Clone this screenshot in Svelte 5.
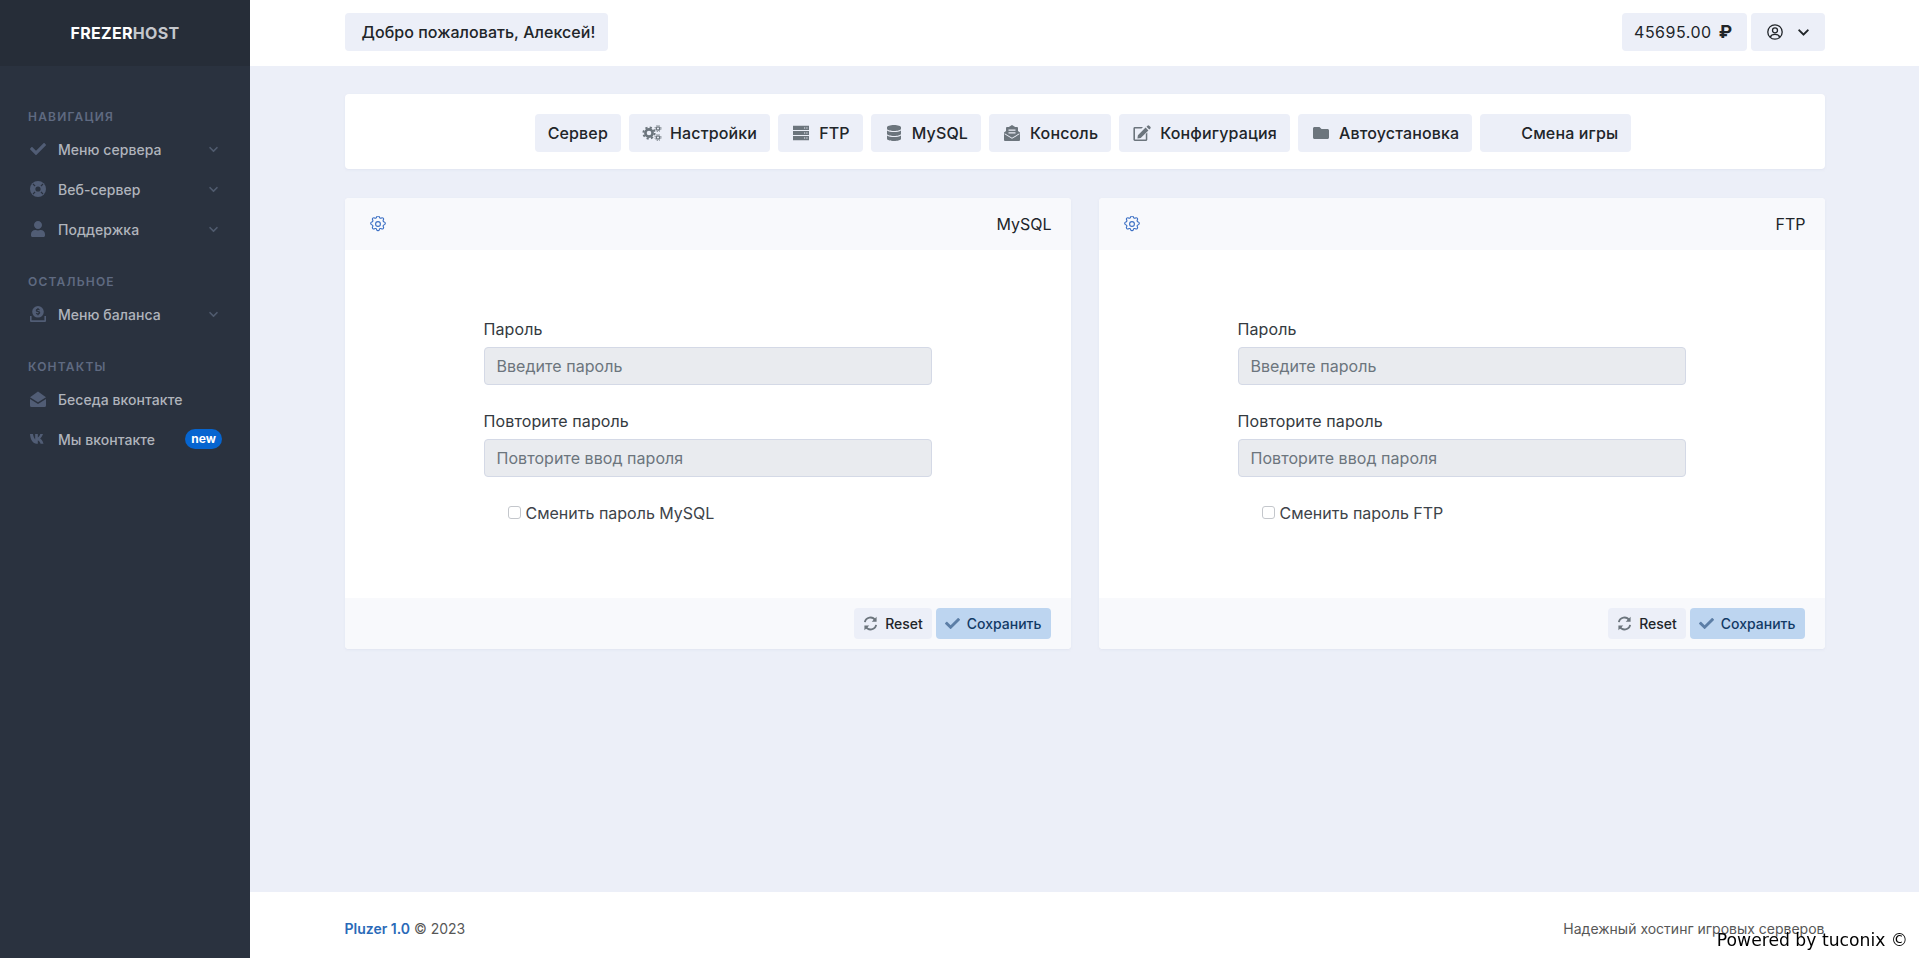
<script>
  const tabs = [
    { label: 'Сервер', icon: null },
    { label: 'Настройки', icon: 'gears' },
    { label: 'FTP', icon: 'server' },
    { label: 'MySQL', icon: 'database' },
    { label: 'Консоль', icon: 'inbox' },
    { label: 'Конфигурация', icon: 'edit' },
    { label: 'Автоустановка', icon: 'folder' },
    { label: 'Смена игры', icon: 'blank' }
  ];
  const cards = [
    { title: 'MySQL', check: 'Сменить пароль MySQL' },
    { title: 'FTP', check: 'Сменить пароль FTP' }
  ];
</script>

{#snippet check(cls)}
  <svg class={cls} viewBox="0 0 512 512"><path fill="currentColor" d="M173.898 439.404l-166.4-166.4c-9.997-9.997-9.997-26.206 0-36.204l36.203-36.204c9.997-9.998 26.207-9.998 36.204 0L192 312.69 432.095 72.596c9.997-9.997 26.207-9.997 36.204 0l36.203 36.204c9.997 9.997 9.997 26.206 0 36.204l-294.4 294.401c-9.998 9.997-26.207 9.997-36.204-.001z"/></svg>
{/snippet}
{#snippet chevron(cls)}
  <svg class={cls} viewBox="0 0 448 512"><path fill="currentColor" d="M207.029 381.476L12.686 187.132c-9.373-9.373-9.373-24.569 0-33.941l22.667-22.667c9.357-9.357 24.522-9.375 33.901-.04L224 284.505l154.745-154.021c9.379-9.335 24.544-9.317 33.901.04l22.667 22.667c9.373 9.373 9.373 24.569 0 33.941L240.971 381.476c-9.373 9.372-24.569 9.372-33.942 0z"/></svg>
{/snippet}
{#snippet gearOutline()}
  <svg class="gear" viewBox="2 2 20 20" fill="none" stroke="currentColor" stroke-width="1.4" stroke-linejoin="round"><path d="M10.3 3.4c.4-1.8 3-1.8 3.4 0a1.7 1.7 0 0 0 2.6 1.1c1.6-1 3.4.8 2.4 2.4a1.7 1.7 0 0 0 1.1 2.6c1.800.4 1.800 3 0 3.4a1.7 1.7 0 0 0-1.1 2.6c1 1.6-.8 3.4-2.4 2.4a1.7 1.7 0 0 0-2.6 1.1c-.4 1.800-3 1.800-3.4 0a1.7 1.7 0 0 0-2.6-1.1c-1.6 1-3.4-.8-2.4-2.4a1.7 1.7 0 0 0-1.1-2.6c-1.800-.4-1.800-3 0-3.4a1.7 1.7 0 0 0 1.1-2.6c-1-1.6.8-3.4 2.4-2.4a1.7 1.7 0 0 0 2.6-1.1z"/><circle cx="12" cy="12" r="3"/></svg>
{/snippet}
{#snippet tabIcon(name)}
  {#if name === 'gears'}
    <svg class="ti" viewBox="0 0 20 16" fill="none" stroke="currentColor"><circle cx="7" cy="8" r="3.6" stroke-width="2.6"/><circle cx="7" cy="8" r="5.6" stroke-width="2" stroke-dasharray="2.2 2.2"/><circle cx="16" cy="3.5" r="1.7" stroke-width="1.3"/><circle cx="16" cy="3.5" r="3" stroke-width="1" stroke-dasharray="1.2 1.2"/><circle cx="16" cy="12.5" r="1.7" stroke-width="1.3"/><circle cx="16" cy="12.5" r="3" stroke-width="1" stroke-dasharray="1.2 1.2"/></svg>
  {:else if name === 'server'}
    <svg class="ti" viewBox="0 0 20 16"><path fill="currentColor" fill-rule="evenodd" d="M2 .8h16v4.300H2zM13 2.400h1.200v1.200H13zM15.300 2.400h1.200v1.200h-1.200zM2 5.900h16v4.200H2zM13 7.400h1.200v1.200H13zM15.300 7.400h1.200v1.200h-1.200zM2 10.900h16v4.300H2zM13 12.400h1.200v1.200H13zM15.300 12.400h1.200v1.200h-1.200z"/></svg>
  {:else if name === 'database'}
    <svg class="ti" viewBox="0 0 448 512"><path fill="currentColor" d="M448 73.143v45.714C448 159.143 347.667 192 224 192S0 159.143 0 118.857V73.143C0 32.857 100.333 0 224 0s224 32.857 224 73.143zM448 176v102.857C448 319.143 347.667 352 224 352S0 319.143 0 278.857V176c48.125 33.143 136.208 48.572 224 48.572S399.874 209.143 448 176zm0 160v102.857C448 479.143 347.667 512 224 512S0 479.143 0 438.857V336c48.125 33.143 136.208 48.572 224 48.572S399.874 369.143 448 336z"/></svg>
  {:else if name === 'inbox'}
    <svg class="ti" viewBox="-2 0 20 16"><path fill="currentColor" fill-rule="evenodd" d="M8 0l3.200 2H13a1 1 0 0 1 1 1v3l2 1.500V15a1 1 0 0 1-1 1H1a1 1 0 0 1-1-1V7.500L2 6V3a1 1 0 0 1 1-1h1.800zM4.500 4.500v1.200h7V4.500zM4.500 7.300v1.200h7V7.300zM.6 8.300L8 12.700l7.400-4.400v1L8 13.700.6 9.300z"/></svg>
  {:else if name === 'edit'}
    <svg class="ti" viewBox="-1 0 20 16"><path fill="currentColor" d="M12.600 2.600l2.800 2.800-7.700 7.700-3.300.5.500-3.300zM13.500 1.700l1-1a1.200 1.200 0 0 1 1.700 0l1.100 1.100a1.200 1.200 0 0 1 0 1.700l-1 1zM1.700 2H10L8.500 3.600H2v10.800h10.800V9l1.500-1.500v7.300a1.500 1.500 0 0 1-1.500 1.200H1.700A1.500 1.500 0 0 1 .4 14.800V3.200A1.500 1.500 0 0 1 1.700 2z"/></svg>
  {:else if name === 'folder'}
    <svg class="ti" viewBox="0 0 512 512"><path fill="currentColor" d="M464 128H272l-64-64H48C21.490 64 0 85.490 0 112v288c0 26.510 21.490 48 48 48h416c26.510 0 48-21.490 48-48V176c0-26.510-21.490-48-48-48z"/></svg>
  {:else}
    <span class="ti"></span>
  {/if}
{/snippet}

<div class="app">
  <aside class="sidebar">
    <div class="brand"><span class="b1">FREZER</span><span class="b2">HOST</span></div>
    <nav class="nav">
      <div class="heading">Навигация</div>
      <a class="item">
        <span class="ni">{@render check('si')}</span><span class="nl">Меню сервера</span>{@render chevron('chev')}
      </a>
      <a class="item">
        <span class="ni"><svg class="si" viewBox="0 0 16 16"><circle cx="8" cy="8" r="8" fill="currentColor"/><path d="M3 3l10 10M13 3L3 13" stroke="#2a323f" stroke-width="1.100"/><circle cx="8" cy="8" r="4.200" fill="currentColor"/><circle cx="8" cy="8" r="2.600" fill="#2a323f"/></svg></span><span class="nl">Веб-сервер</span>{@render chevron('chev')}
      </a>
      <a class="item">
        <span class="ni"><svg class="si" viewBox="0 0 448 512"><path fill="currentColor" d="M224 256c70.700 0 128-57.300 128-128S294.700 0 224 0 96 57.300 96 128s57.300 128 128 128zm89.600 32h-16.700c-22.200 10.200-46.900 16-72.900 16s-50.600-5.800-72.900-16h-16.700C60.200 288 0 348.200 0 422.400V464c0 26.500 21.500 48 48 48h352c26.500 0 48-21.500 48-48v-41.600c0-74.200-60.200-134.400-134.400-134.400z"/></svg></span><span class="nl">Поддержка</span>{@render chevron('chev')}
      </a>
      <div class="heading">Остальное</div>
      <a class="item">
        <span class="ni"><svg class="si" viewBox="0 0 16 16"><path fill="currentColor" fill-rule="evenodd" d="M8 0a5.800 5.800 0 1 1 0 11.600A5.800 5.800 0 0 1 8 0zM7.400 2v.8c-1 .2-1.600.8-1.600 1.600 0 1 .8 1.400 1.800 1.700.8.200 1.100.4 1.100.7s-.4.500-.9.500a2 2 0 0 1-1.400-.5l-.6.900c.4.300 1 .6 1.600.7v.8h1.200v-.8c1-.2 1.600-.8 1.600-1.700 0-1-.7-1.400-1.800-1.700-.8-.2-1.100-.4-1.100-.6s.3-.4.800-.4c.4 0 .9.100 1.300.4l.5-.9a3 3 0 0 0-1.300-.5V2zM0 10h1.600v4.300h12.800V10H16v5a1 1 0 0 1-1 1H1a1 1 0 0 1-1-1z"/></svg></span><span class="nl">Меню баланса</span>{@render chevron('chev')}
      </a>
      <div class="heading">Контакты</div>
      <a class="item">
        <span class="ni"><svg class="si" viewBox="0 0 16 16"><path fill="currentColor" d="M0 6.300L8 .5l8 5.800-8 5-8-5zM0 8v6.500A1.500 1.500 0 0 0 1.500 16h13a1.500 1.500 0 0 0 1.500-1.500V8l-8 5z"/></svg></span><span class="nl">Беседа вконтакте</span>
      </a>
      <a class="item">
        <span class="ni"><svg class="si" viewBox="0 0 18 12"><path fill="currentColor" d="M0 .5h3.300c.5 3 1.700 5.300 2.500 6V.5h3v3.800c.9-.3 2.200-2 2.800-3.800h3c-.5 2.100-2 4-3.200 5 1.200.7 3 2.400 3.800 5.800h-3.300c-.6-2-2-3.300-3.100-3.500v3.500h-.7C4 11.800.3 7.500 0 .5z"/></svg></span><span class="nl">Мы вконтакте</span><span class="new">new</span>
      </a>
    </nav>
  </aside>

  <div class="main">
    <header class="topbar">
      <div class="wrap topin">
        <button class="btn hello">Добро пожаловать, Алексей!</button>
        <div class="topright">
          <button class="btn bal">45695.00 <b class="rub">₽</b></button>
          <button class="btn usr">
            <svg class="uc" viewBox="0 0 16 16" fill="none" stroke="currentColor" stroke-width="1.300"><circle cx="8" cy="8" r="7.200"/><circle cx="8" cy="6.300" r="2.500"/><path d="M3.300 13.200c.6-1.800 2-2.800 4.700-2.800s4.100 1 4.700 2.800"/></svg>
            {@render chevron('uchev')}
          </button>
        </div>
      </div>
    </header>

    <main class="content">
      <div class="wrap">
        <div class="tabs">
          {#each tabs as t}
            <button class="btn tab">{#if t.icon}{@render tabIcon(t.icon)}{/if}{t.label}</button>
          {/each}
        </div>
        <div class="grid">
          {#each cards as c}
            <section class="card">
              <div class="chead">{@render gearOutline()}<span class="ctitle">{c.title}</span></div>
              <div class="cbody">
                <div class="form">
                  <label class="lab" for="">Пароль</label>
                  <input class="inp" placeholder="Введите пароль" disabled />
                  <label class="lab" for="">Повторите пароль</label>
                  <input class="inp" placeholder="Повторите ввод пароля" disabled />
                  <label class="chk"><input type="checkbox" />{c.check}</label>
                </div>
              </div>
              <div class="cfoot">
                <button class="sm reset">
                  <svg class="smi" viewBox="0 0 16 16" fill="none" stroke="currentColor" stroke-width="2"><path d="M2 6.500A6 6 0 0 1 13 4.500"/><path d="M14 9.500A6 6 0 0 1 3 11.500"/><path fill="currentColor" stroke="none" d="M14.500 .8v5.200H9.300zM1.500 15.200V10h5.200z"/></svg>
                  Reset
                </button>
                <button class="sm save">{@render check('smi savei')}Сохранить</button>
              </div>
            </section>
          {/each}
        </div>
      </div>
    </main>

    <footer class="foot">
      <div class="wrap footin">
        <div><a class="pl">Pluzer 1.0</a> © 2023</div>
        <div>Надежный хостинг игровых серверов</div>
      </div>
    </footer>
  </div>
  <div class="powered">Powered by tuconix ©</div>
</div>

<style>
  :global(body) { margin: 0; background: #eceff8; font-family: Inter, "Liberation Sans", sans-serif; color: #212529; font-size: 16px; }
  .app { display: flex; min-height: 958px; }
  .sidebar { width: 250px; flex: none; background: #2a323f; }
  .brand { height: 66px; display: flex; align-items: center; justify-content: center; background: #262d38; font-weight: 700; font-size: 16px; letter-spacing: .3px; }
  .b1 { color: #fff; }
  .b2 { color: #c4c7cc; }
  .nav { padding-top: 18px; }
  .heading { padding: 24px 28px 3px; font-size: 12px; line-height: 18px; font-weight: 600; letter-spacing: .1em; text-transform: uppercase; color: #5f6a81; }
  .item { height: 40px; display: flex; align-items: center; padding: 0 28px; font-size: 14px; font-weight: 500; letter-spacing: .05px; color: #b0b4bc; }
  .ni { width: 20px; display: flex; justify-content: center; margin-right: 10px; color: #515d75; }
  .si { width: 16px; height: 16px; display: block; }
  .nl { flex: 1; }
  .chev { width: 9px; height: 11px; color: #505b6e; margin-right: 4px; display: block; }
  .new { background: #0665d0; color: #fff; font-size: 12px; font-weight: 700; line-height: 20px; padding: 0 6px; border-radius: 10px; }
  .main { flex: 1; min-width: 0; display: flex; flex-direction: column; }
  .wrap { width: 1480px; margin: 0 auto; }
  .topbar { height: 66px; box-sizing: border-box; padding-bottom: 2px; background: #fff; display: flex; align-items: center; }
  .topin { display: flex; justify-content: space-between; align-items: center; }
  .topright { display: flex; gap: 4px; }
  .btn { height: 38px; border: 0; background: #eceff8; border-radius: 4px; font: 500 16px/24px Inter, "Liberation Sans", sans-serif; color: #212529; padding: 0 17px; display: inline-flex; align-items: center; }
  .hello { padding: 0 13px 0 17px; letter-spacing: .05px; }
  .bal { padding: 0 14px 0 12px; font-weight: 400; gap: 7px; letter-spacing: .5px; }
  .rub { font-weight: 700; font-size: 18px; }
  .usr { padding: 0 16px; gap: 15px; }
  .uc { width: 16px; height: 16px; }
  .uchev { width: 11px; height: 13px; }
  .content { flex: 1; padding-top: 28px; }
  .tabs { background: #fff; height: 75px; box-sizing: border-box; padding: 2px 3px 0 0; display: flex; align-items: center; justify-content: center; gap: 8px; box-shadow: 0 1px 2px rgba(215,220,235,.5); border-radius: 4px; }
  .tab { padding: 0 13px; letter-spacing: .15px; }
  .ti { width: 20px; height: 16px; margin-right: 8px; color: #6c757d; display: block; flex: none; }
  .grid { margin-top: 29px; display: grid; grid-template-columns: 726px 726px; gap: 28px; }
  .card { background: #fff; border-radius: 4px; box-shadow: 0 1px 2px rgba(215,220,235,.5); overflow: hidden; }
  .chead { height: 52px; background: #f8f9fc; display: flex; align-items: center; justify-content: space-between; padding: 0 19px 0 25px; }
  .gear { width: 16px; height: 16px; color: #3b6fc4; }
  .ctitle { font-size: 16px; font-weight: 400; }
  .cbody { height: 348px; box-sizing: border-box; padding: 67px 0 0 139px; }
  .form { width: 448px; display: flex; flex-direction: column; }
  .lab { font-size: 16px; line-height: 24px; margin-bottom: 6px; letter-spacing: .12px; color: #343a40; }
  .inp { height: 38px; box-sizing: border-box; border: 1px solid #d4d9e6; border-radius: 4px; background: #e9ebef; font: 400 16px Inter, "Liberation Sans", sans-serif; letter-spacing: .05px; padding: 0 12px; margin-bottom: 24px; }
  .inp::placeholder { color: #6c757d; opacity: 1; }
  .chk { display: flex; align-items: center; line-height: 24px; padding-left: 24px; color: #3d4349; }
  .chk input { appearance: none; width: 13px; height: 13px; box-sizing: border-box; margin: 0 5px 1px 0; background: #fff; border: 1px solid #c4c7cc; border-radius: 3px; }
  .cfoot { height: 51px; background: #f8f9fc; display: flex; justify-content: flex-end; align-items: center; gap: 4px; padding: 0 20px; }
  .sm { height: 31px; border: 0; border-radius: 4px; font: 500 14px Inter, "Liberation Sans", sans-serif; display: inline-flex; align-items: center; padding: 0 9px; gap: 7px; }
  .smi { width: 15px; height: 15px; display: block; }
  .reset { background: #eceff8; color: #212529; }
  .reset .smi { color: #6c757d; }
  .save { background: #bdd5f0; color: #123a66; }
  :global(.savei) { color: #5c7ea6; }
  .foot { height: 66px; background: #fff; font-size: 14px; color: #575757; }
  .footin { display: flex; justify-content: space-between; padding-top: 26px; line-height: 21px; }
  .pl { color: #2a6ab8; font-weight: 600; }
  .powered { position: fixed; right: 11px; bottom: 8px; font-family: "DejaVu Sans", sans-serif; font-size: 17.2px; line-height: 19px; color: #000; }
</style>
